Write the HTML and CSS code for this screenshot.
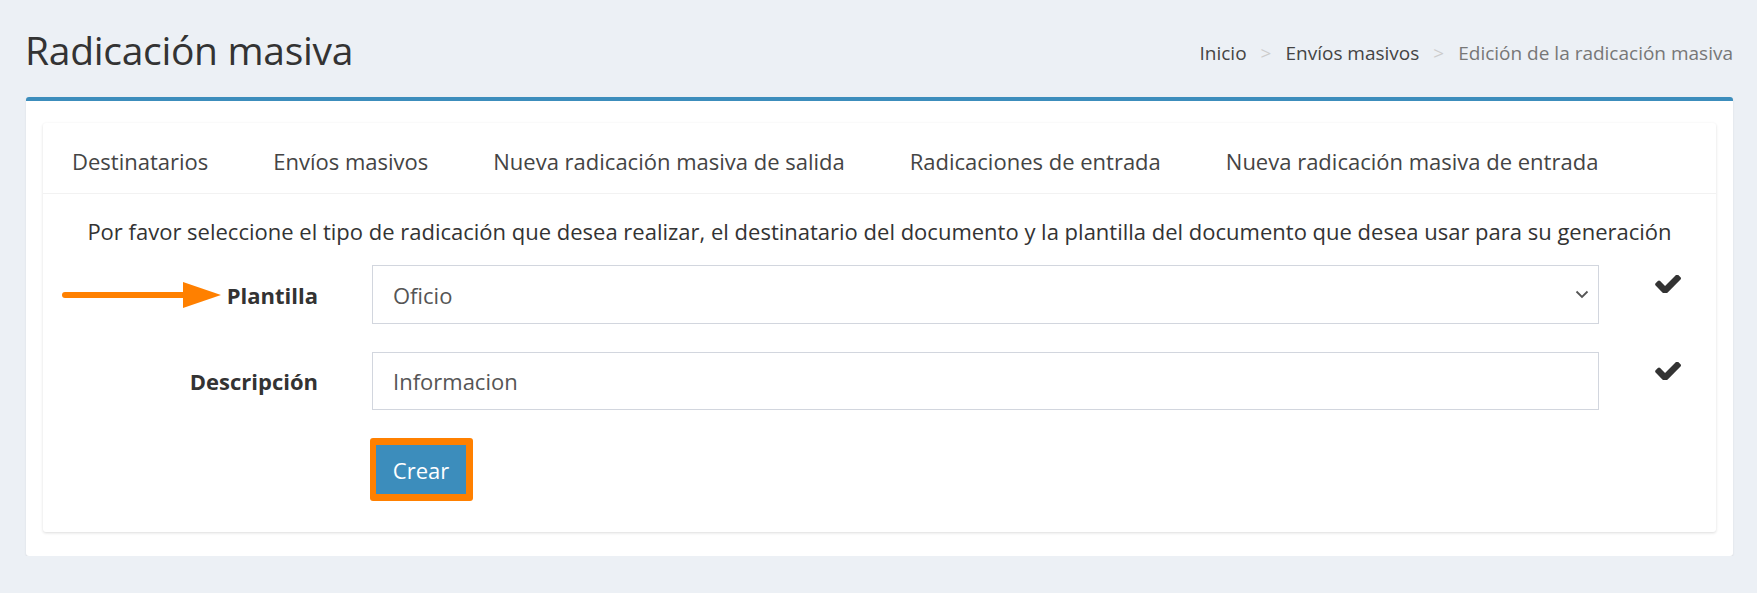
FILE: index.html
```html
<!DOCTYPE html>
<html lang="es">
<head>
  <meta charset="UTF-8">
  <meta name="viewport" content="width=device-width, initial-scale=1.0">
  <title>Radicación masiva</title>
  <link rel="stylesheet" href="styles.css">
</head>
<body>
  <!-- Page header -->
  <section class="content-header">
    <h1>Radicación masiva</h1>
    <ol class="breadcrumb">
      <li><a href="#">Inicio</a></li>
      <li><a href="#">Envíos masivos</a></li>
      <li class="active">Edición de la radicación masiva</li>
    </ol>
  </section>

  <main class="content">
    <div class="box">
      <div class="tabs-card">
        <ul class="nav-tabs">
          <li><a href="#">Destinatarios</a></li>
          <li><a href="#">Envíos masivos</a></li>
          <li><a href="#">Nueva radicación masiva de salida</a></li>
          <li><a href="#">Radicaciones de entrada</a></li>
          <li><a href="#">Nueva radicación masiva de entrada</a></li>
        </ul>

        <div class="tab-content">
          <p class="intro">Por favor seleccione el tipo de radicación que desea realizar, el destinatario del documento y la plantilla del documento que desea usar para su generación</p>

          <form class="form-horizontal">
            <div class="form-group">
              <!-- annotation arrow -->
              <svg class="pointer" width="160" height="28" viewBox="0 0 160 28">
                <line x1="4" y1="14" x2="128" y2="14" stroke="#ff8000" stroke-width="6" stroke-linecap="round"/>
                <polygon points="122,1 160,14 122,27" fill="#ff8000"/>
              </svg>
              <label for="plantilla">Plantilla</label>
              <div class="select-wrap">
                <select id="plantilla">
                  <option>Oficio</option>
                </select>
                <svg class="chevron" width="14" height="9" viewBox="0 0 14 9">
                  <polyline points="1.5,1.5 7,7 12.5,1.5" fill="none" stroke="#555" stroke-width="1.8"/>
                </svg>
              </div>
              <svg class="check" width="26" height="18" viewBox="113 370 1558 1060">
                <path d="M1671 566q0 40-28 68l-724 724-136 136q-28 28-68 28t-68-28l-136-136-362-362q-28-28-28-68t28-68l136-136q28-28 68-28t68 28l294 295 656-657q28-28 68-28t68 28l136 136q28 28 28 68z" fill="#333"/>
              </svg>
            </div>

            <div class="form-group">
              <label for="descripcion">Descripción</label>
              <input type="text" id="descripcion" value="Informacion">
              <svg class="check" width="26" height="18" viewBox="113 370 1558 1060">
                <path d="M1671 566q0 40-28 68l-724 724-136 136q-28 28-68 28t-68-28l-136-136-362-362q-28-28-28-68t28-68l136-136q28-28 68-28t68 28l294 295 656-657q28-28 68-28t68 28l136 136q28 28 28 68z" fill="#333"/>
              </svg>
            </div>

            <div class="form-actions">
              <span class="highlight"><button type="button">Crear</button></span>
            </div>
          </form>
        </div>
      </div>
    </div>
  </main>
</body>
</html>
```

FILE: styles.css
```css
/* General styles */
* {
  box-sizing: border-box;
}

body {
  margin: 0;
  font-family: "Open Sans", Lato, Arial, sans-serif;
  background-color: #ecf0f5;
  color: #333;
}

a {
  color: inherit;
  text-decoration: none;
}

/* Header */
.content-header {
  display: flex;
  justify-content: space-between;
  align-items: center;
  padding: 29px 24px 0 25px;
  height: 71px;
}

.content-header h1 {
  margin: 0;
  font-size: 39px;
  font-weight: 400;
  line-height: 42px;
  letter-spacing: -0.3px;
  color: #333;
}

.breadcrumb {
  display: flex;
  margin: 6px 0 0;
  padding: 0;
  list-style: none;
  font-size: 19px;
  color: #444;
}

.breadcrumb li + li::before {
  content: ">";
  padding: 0 14px;
  color: #ccc;
}

.breadcrumb .active {
  color: #777;
}

/* Box */
.content {
  padding: 26px 24px 0 26px;
}

.box {
  background: #fff;
  border-top: 4px solid #3c8dbc;
  border-radius: 3px;
  box-shadow: 0 1px 2px rgba(0, 0, 0, 0.1);
  padding: 22px 17px 24px;
}

.tabs-card {
  background: #fff;
  border-radius: 3px;
  box-shadow: 0 1px 3px rgba(0, 0, 0, 0.14);
}

/* Tabs */
.nav-tabs {
  display: flex;
  margin: 0;
  padding: 0;
  list-style: none;
  border-bottom: 1px solid #f2f2f2;
}

.nav-tabs a {
  display: block;
  padding: 24px 29px 18px;
  line-height: 28px;
  font-size: 22px;
  color: #444;
}

.nav-tabs li + li a {
  padding-left: 36px;
}

/* Tab content */
.tab-content {
  padding: 22px 0 31px;
}

.intro {
  margin: 0 0 19px;
  text-align: center;
  font-size: 22px;
  line-height: 30px;
}

.form-group {
  position: relative;
  display: grid;
  grid-template-columns: 275px 1227px 1fr;
  column-gap: 54px;
  align-items: center;
  margin-bottom: 28px;
}

.form-group label {
  text-align: right;
  font-weight: 700;
  font-size: 22px;
}

.form-group select,
.form-group input {
  width: 100%;
  height: 59px;
  padding: 0 20px;
  border: 1px solid #d2d6de;
  border-radius: 0;
  background: #fff;
  font-family: inherit;
  font-size: 22px;
  color: #555;
  appearance: none;
}

.form-group input {
  height: 58px;
}

.select-wrap {
  position: relative;
}

.chevron {
  position: absolute;
  right: 10px;
  top: 25px;
  pointer-events: none;
}

.check {
  align-self: start;
  margin: 10px 0 0 2px;
}

.pointer {
  position: absolute;
  left: 18px;
  top: 16px;
}

/* Button */
.form-actions {
  padding-left: 327px;
}

.highlight {
  display: inline-block;
  padding: 7px 7px 7px 6px;
  background: #ff8000;
  border-radius: 3px;
}

.highlight button {
  display: block;
  width: 90px;
  height: 49px;
  border: 0;
  background: #3c8dbc;
  color: #fff;
  font-family: inherit;
  font-size: 22px;
}
```
